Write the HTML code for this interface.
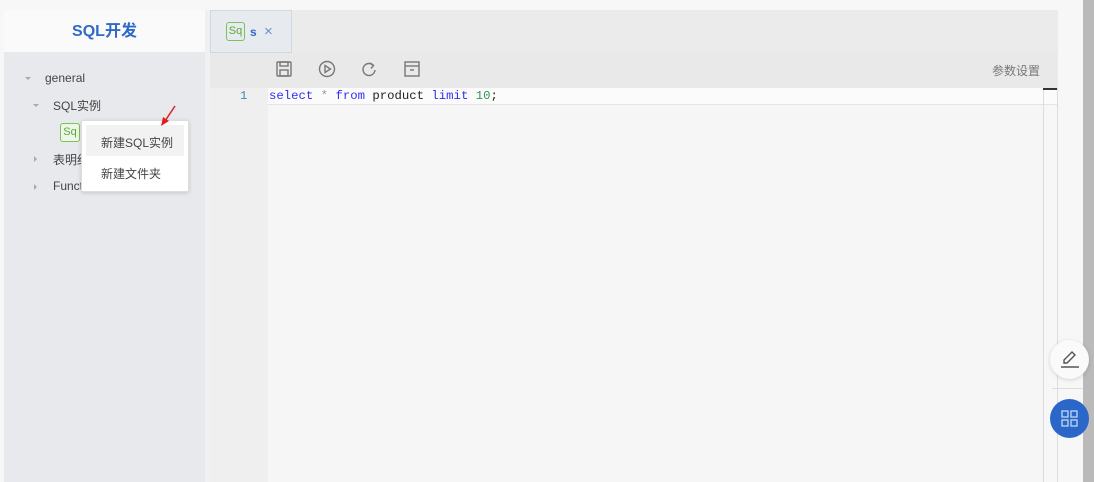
<!DOCTYPE html>
<html><head><meta charset="utf-8"><style>
*{box-sizing:border-box;margin:0;padding:0}
body{width:1094px;height:482px;overflow:hidden;background:#f7f7f7;font-family:"Liberation Sans","Noto Sans CJK SC",sans-serif;position:relative;font-size:12px;color:#333}
.abs{position:absolute}
.mono{font-family:"Liberation Mono","DejaVu Sans Mono",monospace;font-size:12.3px}
</style></head><body>
<div class="abs" style="left:4px;top:10px;width:201px;height:42px;background:#fafafa;text-align:center;line-height:44px;font-size:16px;font-weight:bold;color:#2f6bc6">SQL开发</div>
<div class="abs" style="left:4px;top:52px;width:201px;height:430px;background:#e8e9ec"></div>
<div class="abs" style="left:205px;top:10px;width:5px;height:472px;background:#f0f0f0"></div>
<div class="abs" style="left:25px;top:77px;width:0;height:0;border-left:3px solid transparent;border-right:3px solid transparent;border-top:3px solid #aaa"></div>
<div class="abs" style="left:45px;top:71px;font-size:12px;color:#444">general</div>
<div class="abs" style="left:33px;top:104px;width:0;height:0;border-left:3px solid transparent;border-right:3px solid transparent;border-top:3px solid #aaa"></div>
<div class="abs" style="left:53px;top:97px;font-size:12px;color:#444">SQL实例</div>
<div class="abs" style="left:60px;top:123px;width:20px;height:19px;border:1px solid #7ac35a;border-radius:3px;color:#5aa83a;font-size:11px;line-height:17px;text-align:center;background:#eef6ea">Sq</div>
<div class="abs" style="left:34px;top:156px;width:0;height:0;border-top:3px solid transparent;border-bottom:3px solid transparent;border-left:3px solid #aaa"></div>
<div class="abs" style="left:53px;top:151px;font-size:12px;color:#444">表明细</div>
<div class="abs" style="left:34px;top:184px;width:0;height:0;border-top:3px solid transparent;border-bottom:3px solid transparent;border-left:3px solid #aaa"></div>
<div class="abs" style="left:53px;top:179px;font-size:12px;color:#444">Functions</div>
<div class="abs" style="left:81px;top:120px;width:108px;height:72px;background:#fff;border:1px solid #ddd;box-shadow:0 1px 4px rgba(0,0,0,.15);border-radius:2px"></div>
<div class="abs" style="left:86px;top:125px;width:98px;height:31px;background:#f2f2f2"></div>
<div class="abs" style="left:101px;top:134px;font-size:12px;color:#444">新建SQL实例</div>
<div class="abs" style="left:101px;top:165px;font-size:12px;color:#444">新建文件夹</div>
<svg class="abs" style="left:158px;top:104px" width="20" height="24"><line x1="17" y1="2" x2="7" y2="17" stroke="#e02020" stroke-width="1.5"/><polygon points="3,22 5,13 11,17" fill="#e02020"/></svg>
<div class="abs" style="left:210px;top:10px;width:848px;height:43px;background:#ebebeb"></div>
<div class="abs" style="left:210px;top:10px;width:82px;height:43px;background:#e7ebf0;border:1px solid #d3d8e0"></div>
<div class="abs" style="left:226px;top:22px;width:19px;height:19px;border:1px solid #7ac35a;border-radius:3px;color:#5aa83a;font-size:11px;line-height:17px;text-align:center">Sq</div>
<div class="abs" style="left:250px;top:25px;color:#2f6bc6;font-weight:bold;font-size:12px">s</div>
<div class="abs" style="left:264px;top:23px;color:#6b8fc9;font-size:15px">×</div>
<div class="abs" style="left:210px;top:53px;width:848px;height:35px;background:#e9e9e9"></div>
<svg class="abs" style="left:276px;top:61px" width="16" height="16" fill="none" stroke="#777" stroke-width="1.4"><rect x="1" y="1" width="14" height="14" rx="1"/><rect x="4" y="1" width="8" height="4"/><rect x="4" y="9" width="8" height="6"/></svg>
<svg class="abs" style="left:318px;top:60px" width="18" height="18" fill="none" stroke="#777" stroke-width="1.4"><circle cx="9" cy="9" r="7.5"/><polygon points="7,5.5 12.5,9 7,12.5"/></svg>
<svg class="abs" style="left:361px;top:61px" width="16" height="16" fill="none" stroke="#777" stroke-width="1.4"><path d="M12.5 4.5A6 6 0 1 0 14 9"/><polyline points="9,2 12.5,4.5 10,7.5"/></svg>
<svg class="abs" style="left:404px;top:61px" width="16" height="16" fill="none" stroke="#777" stroke-width="1.4"><rect x="1" y="1" width="14" height="14"/><line x1="1" y1="5" x2="15" y2="5"/><line x1="6" y1="9" x2="10" y2="9"/></svg>
<div class="abs" style="left:992px;top:62px;font-size:12px;color:#777">参数设置</div>
<div class="abs" style="left:210px;top:88px;width:58px;height:394px;background:#efefef"></div>
<div class="abs" style="left:268px;top:88px;width:775px;height:394px;background:#f6f6f6"></div>
<div class="abs" style="left:268px;top:88px;width:789px;height:17px;background:#fbfbfb;border-bottom:1px solid #e4e4e4"></div>
<div class="abs" style="left:1043px;top:88px;width:15px;height:394px;border-left:1px solid #ddd;border-right:1px solid #ddd"></div>
<div class="abs" style="left:1043px;top:88px;width:14px;height:2px;background:#333"></div>
<div class="abs mono" style="left:240px;top:89px;color:#3a8fb7">1</div>
<div class="abs mono" style="left:269px;top:89px;white-space:pre"><span style="color:#3030ee">select</span> <span style="color:#999">*</span> <span style="color:#3030ee">from</span> <span style="color:#222">product</span> <span style="color:#3030ee">limit</span> <span style="color:#2a9a55">10</span><span style="color:#222">;</span></div>
<div class="abs" style="left:1083px;top:0;width:11px;height:482px;background:#bababa"></div>
<div class="abs" style="left:1050px;top:340px;width:39px;height:39px;border-radius:50%;background:#fafafa;box-shadow:0 1px 4px rgba(0,0,0,.15)"></div>
<svg class="abs" style="left:1060px;top:349px" width="20" height="20" fill="none" stroke="#555" stroke-width="1.4"><path d="M4 14 L4 11 L12 3 L15 6 L7 14 Z"/><line x1="1" y1="18" x2="19" y2="18"/></svg>
<div class="abs" style="left:1052px;top:388px;width:31px;height:1px;background:#ddd"></div>
<div class="abs" style="left:1050px;top:399px;width:39px;height:39px;border-radius:50%;background:#2a67c9"></div>
<svg class="abs" style="left:1061px;top:410px" width="17" height="17" fill="none" stroke="#cfe0f7" stroke-width="1.2"><rect x="1" y="1" width="6" height="6"/><rect x="10" y="1" width="6" height="6"/><rect x="1" y="10" width="6" height="6"/><rect x="10" y="10" width="6" height="6"/></svg>
</body></html>
